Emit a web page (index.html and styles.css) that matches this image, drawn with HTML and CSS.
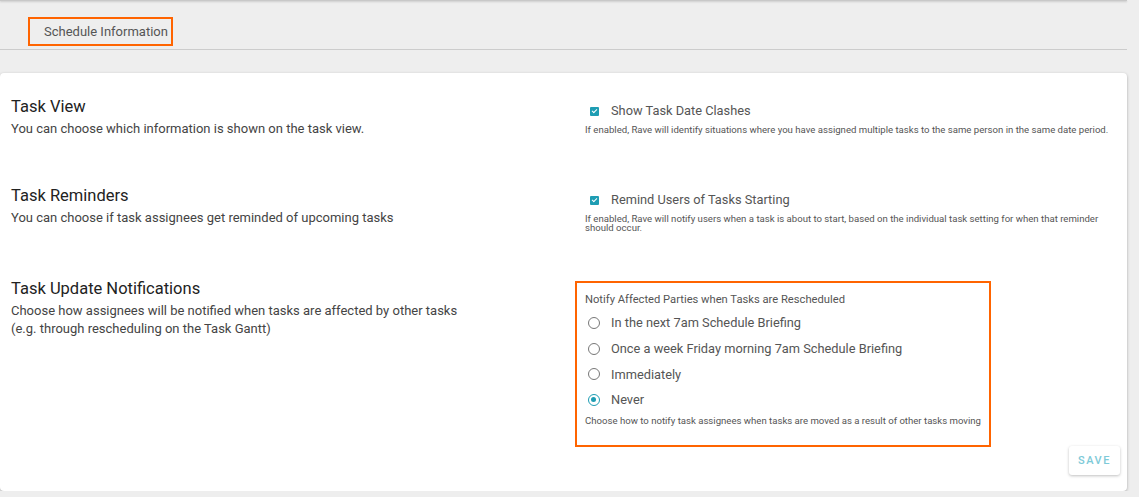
FILE: index.html
```html
<!DOCTYPE html>
<html lang="en">
<head>
    <meta charset="UTF-8">
    <title>Schedule Information</title>
    <link rel="stylesheet" href="styles.css">
</head>
<body>
    <div class="page">
        <div class="top-edge"></div>

        <div class="tabs">
            <div class="tab active">Schedule Information</div>
        </div>

        <div class="card">
            <div class="setting task-view">
                <div class="setting-info">
                    <h2>Task View</h2>
                    <p>You can choose which information is shown on the task view.</p>
                </div>
                <div class="setting-control">
                    <label class="check-row">
                        <span class="checkbox checked"></span>
                        <span>Show Task Date Clashes</span>
                    </label>
                    <div class="hint">If enabled, Rave will identify situations where you have assigned multiple tasks to the same person in the same date period.</div>
                </div>
            </div>

            <div class="setting task-reminders">
                <div class="setting-info">
                    <h2>Task Reminders</h2>
                    <p>You can choose if task assignees get reminded of upcoming tasks</p>
                </div>
                <div class="setting-control">
                    <label class="check-row">
                        <span class="checkbox checked"></span>
                        <span>Remind Users of Tasks Starting</span>
                    </label>
                    <div class="hint">If enabled, Rave will notify users when a task is about to start, based on the individual task setting for when that reminder should occur.</div>
                </div>
            </div>

            <div class="setting last">
                <div class="setting-info">
                    <h2>Task Update Notifications</h2>
                    <p>Choose how assignees will be notified when tasks are affected by other tasks<br>(e.g. through rescheduling on the Task Gantt)</p>
                </div>
                <div class="radio-box">
                    <div class="radio-title">Notify Affected Parties when Tasks are Rescheduled</div>
                    <label class="radio-row"><span class="radio"></span>In the next 7am Schedule Briefing</label>
                    <label class="radio-row"><span class="radio"></span>Once a week Friday morning 7am Schedule Briefing</label>
                    <label class="radio-row"><span class="radio"></span>Immediately</label>
                    <label class="radio-row"><span class="radio selected"></span>Never</label>
                    <div class="radio-hint">Choose how to notify task assignees when tasks are moved as a result of other tasks moving</div>
                </div>
            </div>

            <div class="card-footer">
                <button class="save-btn">Save</button>
            </div>
        </div>
    </div>
</body>
</html>
```

FILE: styles.css
```css
* {
    margin: 0;
    padding: 0;
    box-sizing: border-box;
}

body {
    font-family: Roboto, "Liberation Sans", sans-serif;
    background: #eeeeee;
    color: #444;
}

.page {
    width: 1127px;
}

.top-edge {
    height: 1px;
    background: #c8c8c8;
    box-shadow: 0 1px 2px rgba(0, 0, 0, 0.2);
}

.tabs {
    height: 49px;
    padding: 16px 0 0 28px;
    border-bottom: 1px solid #cccccc;
}

.tab {
    display: inline-block;
    height: 29px;
    padding: 0 3px 0 14px;
    border: 2px solid #ff6400;
    font-size: 13px;
    line-height: 25px;
    color: #555;
}

.card {
    margin-top: 23px;
    background: white;
    border-radius: 4px;
    box-shadow: 0 1px 3px rgba(0, 0, 0, 0.3);
    padding: 24px 7px 16px 11px;
}

.setting {
    display: grid;
    grid-template-columns: 564px 1fr;
}

.setting.task-view {
    margin-bottom: 48px;
}

.setting.task-reminders {
    margin-bottom: 47px;
}

.setting-info h2 {
    font-size: 16.5px;
    font-weight: 400;
    line-height: 20px;
    color: #222;
    margin-bottom: 3px;
}

.setting-info p {
    font-size: 13px;
    line-height: 18px;
    color: #444;
}

.setting-control {
    padding: 5px 0 0 10px;
}

.check-row {
    display: flex;
    align-items: center;
    gap: 12px;
    margin-left: 5px;
    font-size: 12.8px;
    line-height: 18px;
    color: #555;
}

.checkbox {
    width: 9px;
    height: 9px;
    border-radius: 1px;
    background: #1e9db3;
    position: relative;
}

.checkbox.checked::after {
    content: "";
    position: absolute;
    left: 3px;
    top: 1px;
    width: 2px;
    height: 4px;
    border: solid white;
    border-width: 0 1px 1px 0;
    transform: rotate(45deg);
}

.hint {
    margin-top: 5px;
    font-size: 9.6px;
    line-height: 9px;
    color: #555;
}

.radio-box {
    width: 416px;
    border: 2px solid #ff6400;
    padding: 10px 8px 18px 8px;
    margin-top: 2px;
}

.radio-title {
    font-size: 11.2px;
    line-height: 14px;
    color: #555;
    margin-bottom: 3px;
}

.radio-row {
    display: flex;
    align-items: center;
    gap: 11px;
    height: 25.7px;
    padding-left: 3px;
    font-size: 12.8px;
    color: #555;
}

.radio {
    width: 12px;
    height: 12px;
    border: 1.5px solid #777;
    border-radius: 50%;
    position: relative;
}

.radio.selected {
    border-color: #1e9db3;
}

.radio.selected::after {
    content: "";
    position: absolute;
    left: 2px;
    top: 2px;
    width: 5px;
    height: 5px;
    border-radius: 50%;
    background: #1e9db3;
}

.radio-hint {
    margin-top: 2px;
    font-size: 9.6px;
    line-height: 12px;
    color: #555;
}

.card-footer {
    display: flex;
    justify-content: flex-end;
}

.save-btn {
    width: 51px;
    height: 29px;
    margin-top: -1px;
    border: none;
    border-radius: 3px;
    background: white;
    box-shadow: 0 1px 3px rgba(0, 0, 0, 0.25);
    font-family: Roboto, sans-serif;
    font-size: 11px;
    font-weight: 500;
    letter-spacing: 1.5px;
    text-transform: uppercase;
    color: #7ecad8;
}
```
